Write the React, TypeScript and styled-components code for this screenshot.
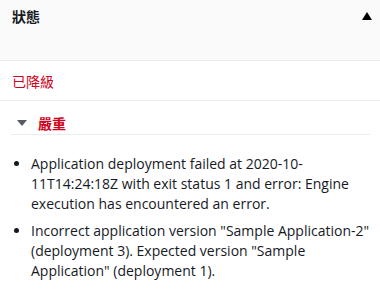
import React from 'react'
import styled, { createGlobalStyle } from 'styled-components'

const GlobalStyle = createGlobalStyle`
  html, body {
    margin: 0;
    padding: 0;
    background: #ffffff;
  }
  body {
    font-family: "Open Sans", "Noto Sans CJK TC", sans-serif;
    color: #16191f;
  }
`

const Panel = styled.div`
  width: 380px;
  height: 292px;
  overflow: hidden;
  background: #ffffff;
`

const PanelHeader = styled.div`
  display: flex;
  justify-content: space-between;
  align-items: flex-start;
  height: 54px;
  padding: 6px 8px 0 12px;
  background: #fafafa;
  border-bottom: 1px solid #eaeded;
`

const Title = styled.h2`
  margin: 0;
  font-family: "Noto Sans CJK TC", sans-serif;
  font-size: 14px;
  line-height: 20px;
  font-weight: 700;
  color: #16191f;
`

const Caret = styled.span<{ $dir: 'up' | 'down'; $color: string }>`
  display: inline-block;
  width: 0;
  height: 0;
  border-left: 5px solid transparent;
  border-right: 5px solid transparent;
  ${(p) =>
    p.$dir === 'up'
      ? `border-bottom: 8px solid ${p.$color};`
      : `border-top: 6px solid ${p.$color};`}
`

const CollapseButton = styled.button`
  display: flex;
  align-items: center;
  padding: 0;
  margin-top: 6px;
  border: none;
  background: none;
  cursor: pointer;
`

const StatusRow = styled.div`
  padding: 10px 12px 9px;
  border-bottom: 1px solid #eaeded;
  font-family: "Noto Sans CJK TC", sans-serif;
  font-size: 14px;
  line-height: 20px;
  color: #d0021b;
`

const Section = styled.div`
  padding: 0 10px 0 11px;
`

const SectionHeader = styled.div`
  display: flex;
  align-items: center;
  gap: 11px;
  padding: 12px 0 1px 6px;
  border-bottom: 1px solid #eaeded;
`

const Severity = styled.span`
  font-family: "Noto Sans CJK TC", sans-serif;
  font-size: 14px;
  line-height: 20px;
  font-weight: 700;
  color: #d0021b;
`

const Messages = styled.ul`
  margin: 0;
  padding: 19px 0 0 20px;
  list-style: disc;
`

const Message = styled.li`
  font-size: 14px;
  line-height: 20px;
  color: #16191f;
  & + & {
    margin-top: 7px;
  }
`

const messages = [
  'Application deployment failed at 2020-10-11T14:24:18Z with exit status 1 and error: Engine execution has encountered an error.',
  'Incorrect application version "Sample Application-2" (deployment 3). Expected version "Sample Application" (deployment 1).',
]

export default function App() {
  return (
    <Panel>
      <GlobalStyle />
      <PanelHeader>
        <Title>狀態</Title>
        <CollapseButton aria-label="collapse">
          <Caret $dir="up" $color="#000000" />
        </CollapseButton>
      </PanelHeader>
      <StatusRow>已降級</StatusRow>
      <Section>
        <SectionHeader>
          <Caret $dir="down" $color="#545b64" />
          <Severity>嚴重</Severity>
        </SectionHeader>
        <Messages>
          {messages.map((m) => (
            <Message key={m}>{m}</Message>
          ))}
        </Messages>
      </Section>
    </Panel>
  )
}
